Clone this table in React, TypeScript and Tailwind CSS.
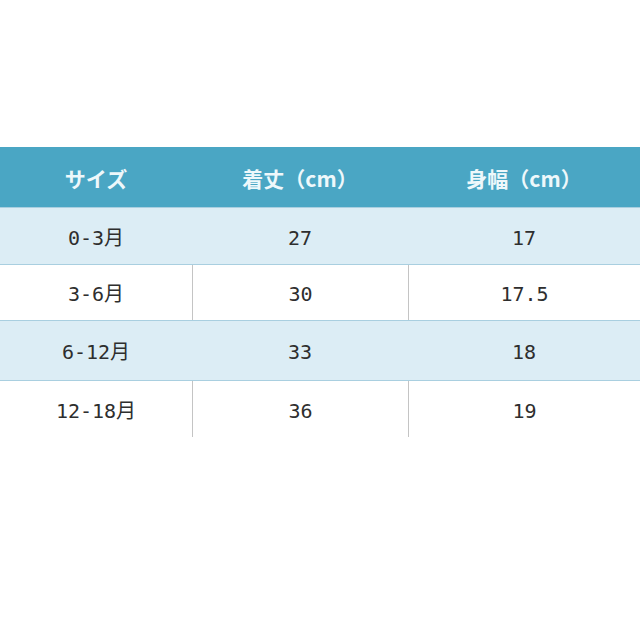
const header = ["サイズ", "着丈（cm）", "身幅（cm）"]

const rows = [
  { size: "0-3月", length: "27", width: "17", h: "h-[58px]", striped: true },
  { size: "3-6月", length: "30", width: "17.5", h: "h-[55px]", striped: false },
  { size: "6-12月", length: "33", width: "18", h: "h-[61px]", striped: true },
  { size: "12-18月", length: "36", width: "19", h: "h-[56px]", striped: false },
]

const body = {
  fontFamily: '"DejaVu Sans Mono", "Noto Sans CJK JP", monospace',
}

export default function App() {
  return (
    <div className="h-[640px] w-[640px] bg-white pt-[147px]">
      <div
        className="grid h-[60px] grid-cols-[192px_216px_1fr] items-center bg-[#4aa6c4] pt-[3px] text-[21px] font-bold text-[#eef8fb]"
        style={{ fontFamily: '"Noto Sans CJK JP", sans-serif' }}
      >
        {header.map((label) => (
          <div key={label} className="text-center">
            {label}
          </div>
        ))}
      </div>

      {rows.map((row) => (
        <div
          key={row.size}
          className={`grid grid-cols-[192px_216px_1fr] items-stretch text-[20px] text-[#2e2e2e] ${row.h} ${
            row.striped
              ? "border-y border-[#a9cfe0] bg-[#dcedf5]"
              : "bg-white"
          }`}
          style={body}
        >
          <div className="flex items-center justify-center pt-[3px]">{row.size}</div>
          <div
            className={`flex items-center justify-center pt-[3px] ${
              row.striped ? "" : "border-l border-[#c4c4c4]"
            }`}
          >
            {row.length}
          </div>
          <div
            className={`flex items-center justify-center pt-[3px] ${
              row.striped ? "" : "border-l border-[#c4c4c4]"
            }`}
          >
            {row.width}
          </div>
        </div>
      ))}
    </div>
  )
}
